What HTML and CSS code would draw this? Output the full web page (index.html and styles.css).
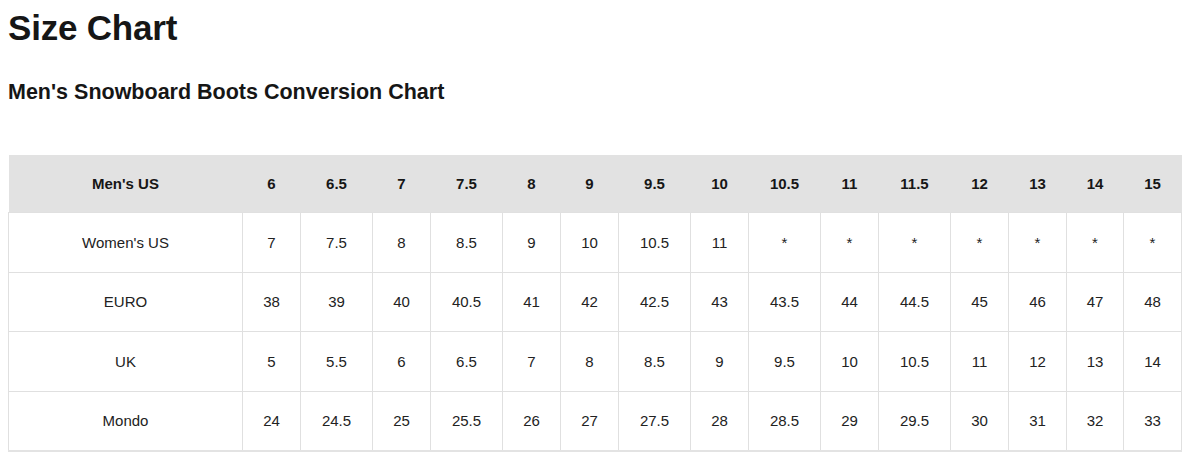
FILE: index.html
```html
<!DOCTYPE html>
<html lang="en">
<head>
<meta charset="utf-8">
<title>Size Chart</title>
<link rel="stylesheet" href="styles.css">
</head>
<body>
<h1 class="title">Size Chart</h1>
<h2 class="subtitle">Men's Snowboard Boots Conversion Chart</h2>
<table class="chart">
  <thead>
    <tr>
      <th class="c-label">Men's US</th>
      <th class="c-int">6</th>
      <th class="c-half">6.5</th>
      <th class="c-int">7</th>
      <th class="c-half">7.5</th>
      <th class="c-int">8</th>
      <th class="c-int">9</th>
      <th class="c-half">9.5</th>
      <th class="c-int">10</th>
      <th class="c-half">10.5</th>
      <th class="c-int">11</th>
      <th class="c-half">11.5</th>
      <th class="c-int">12</th>
      <th class="c-int">13</th>
      <th class="c-narrow">14</th>
      <th class="c-int">15</th>
    </tr>
  </thead>
  <tbody>
    <tr>
      <td>Women's US</td>
      <td>7</td><td>7.5</td><td>8</td><td>8.5</td><td>9</td><td>10</td><td>10.5</td><td>11</td>
      <td>*</td><td>*</td><td>*</td><td>*</td><td>*</td><td>*</td><td>*</td>
    </tr>
    <tr>
      <td>EURO</td>
      <td>38</td><td>39</td><td>40</td><td>40.5</td><td>41</td><td>42</td><td>42.5</td><td>43</td>
      <td>43.5</td><td>44</td><td>44.5</td><td>45</td><td>46</td><td>47</td><td>48</td>
    </tr>
    <tr>
      <td>UK</td>
      <td>5</td><td>5.5</td><td>6</td><td>6.5</td><td>7</td><td>8</td><td>8.5</td><td>9</td>
      <td>9.5</td><td>10</td><td>10.5</td><td>11</td><td>12</td><td>13</td><td>14</td>
    </tr>
    <tr class="last">
      <td>Mondo</td>
      <td>24</td><td>24.5</td><td>25</td><td>25.5</td><td>26</td><td>27</td><td>27.5</td><td>28</td>
      <td>28.5</td><td>29</td><td>29.5</td><td>30</td><td>31</td><td>32</td><td>33</td>
    </tr>
  </tbody>
</table>
</body>
</html>
```
FILE: styles.css
```css
html, body {
  background: #ffffff;
}
body {
  margin: 8px;
  font-family: "Liberation Sans", Arial, sans-serif;
  color: #222222;
}
.title {
  margin: 0;
  font-size: 35px;
  font-weight: 700;
  letter-spacing: -0.2px;
  color: #161616;
}
.subtitle {
  margin: 32px 0 0 0;
  font-size: 21.5px;
  font-weight: 700;
  color: #161616;
}
.chart {
  margin-top: 50px;
  width: 1174px;
  table-layout: fixed;
  border-collapse: collapse;
  font-size: 15px;
}
.chart th {
  background: #e2e2e2;
  height: 57px;
  padding: 0;
  font-weight: 700;
  color: #161616;
  text-align: center;
  border: none;
}
.chart td {
  height: 58.5px;
  padding: 0;
  text-align: center;
  border: 1px solid #e0e0e0;
  color: #222222;
}
.chart .last td {
  border-bottom: 2px solid #e3e3e3;
}
.c-label { width: 234px; }
.c-int { width: 58px; }
.c-half { width: 72px; }
.c-narrow { width: 57px; }
```
